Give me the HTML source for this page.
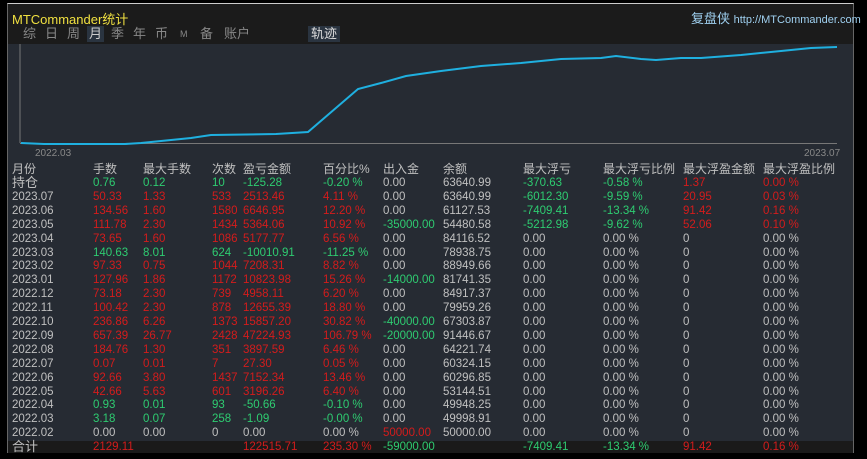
<!DOCTYPE html><html><head><meta charset="utf-8"><style>
body{margin:0;width:867px;height:459px;background:#000;overflow:hidden;font-family:"Liberation Sans","Noto Sans CJK SC",sans-serif;position:relative}
#p{position:absolute;left:7px;top:3px;width:845px;height:449px;background:#262b33;border-top:1px solid #ccc;border-left:1px solid #666;border-right:1px solid #666}
#top{position:absolute;left:0;top:0;width:845px;height:40px;background:#1b1b1b}
.t{position:absolute;white-space:nowrap}
.tab{position:absolute;top:22px;font-size:13px;color:#888;line-height:16px}
.r{position:absolute;left:0;width:845px;height:14px;font-size:11.5px;line-height:14px;color:#c0c0c0}
.r span{position:absolute;top:0;white-space:nowrap}
.g{color:#2ecc71}.d{color:#d41c1c}
</style></head><body>
<div id="p">
<div id="top">
<div class="t" style="left:4px;top:5px;font-size:13px;color:#f0e040">MTCommander统计</div>
<div class="t" style="left:683px;top:4px;font-size:13px;color:#9fd0f0">复盘侠 <span style="font-size:11px">http://MTCommander.com</span></div>
<span class="tab" style="left:15px">综</span>
<span class="tab" style="left:37px">日</span>
<span class="tab" style="left:59px">周</span>
<span class="tab" style="left:79px;background:#2a3440;color:#ccc;padding:0 2px">月</span>
<span class="tab" style="left:103px">季</span>
<span class="tab" style="left:125px">年</span>
<span class="tab" style="left:147px">币</span>
<span class="tab" style="left:172px;font-size:9px">M</span>
<span class="tab" style="left:192px">备</span>
<span class="tab" style="left:216px">账户</span>
<span class="tab" style="left:300px;color:#ddd;background:#2a3440;padding:0 3px">轨迹</span>
</div>
<svg style="position:absolute;left:0;top:0" width="845" height="160">
<line x1="12" y1="40" x2="12" y2="139" stroke="#777"/>
<line x1="12" y1="139.5" x2="829" y2="139.5" stroke="#777"/>
<polyline fill="none" stroke="#1fb0e0" stroke-width="2" points="13,139 36,140 117,140 133,139 183,134 203,131 268,130 300,128 350,85 373,79 398,72 433,67 473,62 513,59 553,55 593,54 608,52 633,55 648,56 673,54 693,54 733,51 773,47 803,44 829,43"/>
<text x="27" y="152" fill="#888" font-size="10" font-family="Liberation Sans">2022.03</text>
<text x="796" y="152" fill="#888" font-size="10" font-family="Liberation Sans">2023.07</text>
</svg>
<div style="position:absolute;left:0;top:437px;width:845px;height:12px;background:#1a1a1a"></div>
<div id="rows"></div>
</div>
<script>
var xs=[4,85,135,204,235,315,375,435,515,595,675,755];
var H=["月份","手数","最大手数","次数","盈亏金额","百分比%","出入金","余额","最大浮亏","最大浮亏比例","最大浮盈金额","最大浮盈比例"];
var D=[
["持仓","g0.76","g0.12","g10","g-125.28","g-0.20 %","0.00","63640.99","g-370.63","g-0.58 %","d1.37","d0.00 %"],
["2023.07","d50.33","d1.33","d533","d2513.46","d4.11 %","0.00","63640.99","g-6012.30","g-9.59 %","d20.95","d0.03 %"],
["2023.06","d134.56","d1.60","d1580","d6646.95","d12.20 %","0.00","61127.53","g-7409.41","g-13.34 %","d91.42","d0.16 %"],
["2023.05","d111.78","d2.30","d1434","d5364.06","d10.92 %","g-35000.00","54480.58","g-5212.98","g-9.62 %","d52.06","d0.10 %"],
["2023.04","d73.65","d1.60","d1086","d5177.77","d6.56 %","0.00","84116.52","0.00","0.00 %","0","0.00 %"],
["2023.03","g140.63","g8.01","g624","g-10010.91","g-11.25 %","0.00","78938.75","0.00","0.00 %","0","0.00 %"],
["2023.02","d97.33","d0.75","d1044","d7208.31","d8.82 %","0.00","88949.66","0.00","0.00 %","0","0.00 %"],
["2023.01","d127.96","d1.86","d1172","d10823.98","d15.26 %","g-14000.00","81741.35","0.00","0.00 %","0","0.00 %"],
["2022.12","d73.18","d2.30","d739","d4958.11","d6.20 %","0.00","84917.37","0.00","0.00 %","0","0.00 %"],
["2022.11","d100.42","d2.30","d878","d12655.39","d18.80 %","0.00","79959.26","0.00","0.00 %","0","0.00 %"],
["2022.10","d236.86","d6.26","d1373","d15857.20","d30.82 %","g-40000.00","67303.87","0.00","0.00 %","0","0.00 %"],
["2022.09","d657.39","d26.77","d2428","d47224.93","d106.79 %","g-20000.00","91446.67","0.00","0.00 %","0","0.00 %"],
["2022.08","d184.76","d1.30","d351","d3897.59","d6.46 %","0.00","64221.74","0.00","0.00 %","0","0.00 %"],
["2022.07","d0.07","d0.01","d7","d27.30","d0.05 %","0.00","60324.15","0.00","0.00 %","0","0.00 %"],
["2022.06","d92.66","d3.80","d1437","d7152.34","d13.46 %","0.00","60296.85","0.00","0.00 %","0","0.00 %"],
["2022.05","d42.66","d5.63","d601","d3196.26","d6.40 %","0.00","53144.51","0.00","0.00 %","0","0.00 %"],
["2022.04","g0.93","g0.01","g93","g-50.66","g-0.10 %","0.00","49948.25","0.00","0.00 %","0","0.00 %"],
["2022.03","g3.18","g0.07","g258","g-1.09","g-0.00 %","0.00","49998.91","0.00","0.00 %","0","0.00 %"],
["2022.02","0.00","0.00","0","0.00","0.00 %","d50000.00","50000.00","0.00","0.00 %","0","0.00 %"],
["合计","d2129.11","","","d122515.71","d235.30 %","g-59000.00","","g-7409.41","g-13.34 %","d91.42","d0.16 %"]];
var h='<div class="r" style="top:157px;font-size:12px;height:16px;line-height:16px">';
H.forEach(function(t,i){h+='<span style="left:'+xs[i]+'px">'+t+'</span>'});h+='</div>';
D.forEach(function(r,j){var top=j==19?437:172+j*13.9;var fs=(j==0||j==19)?'font-size:13px;':'';
h+='<div class="r" style="top:'+top+'px;'+(j==19?'height:12px;line-height:12px':'')+'">';r.forEach(function(c,i){var cl='';if(c[0]=='g'||c[0]=='d'){cl=c[0];c=c.slice(1)}
h+='<span class="'+cl+'" style="left:'+xs[i]+'px;'+(i==0?fs:'')+'">'+c+'</span>'});h+='</div>'});
document.getElementById('rows').innerHTML=h;
</script>
</body></html>
